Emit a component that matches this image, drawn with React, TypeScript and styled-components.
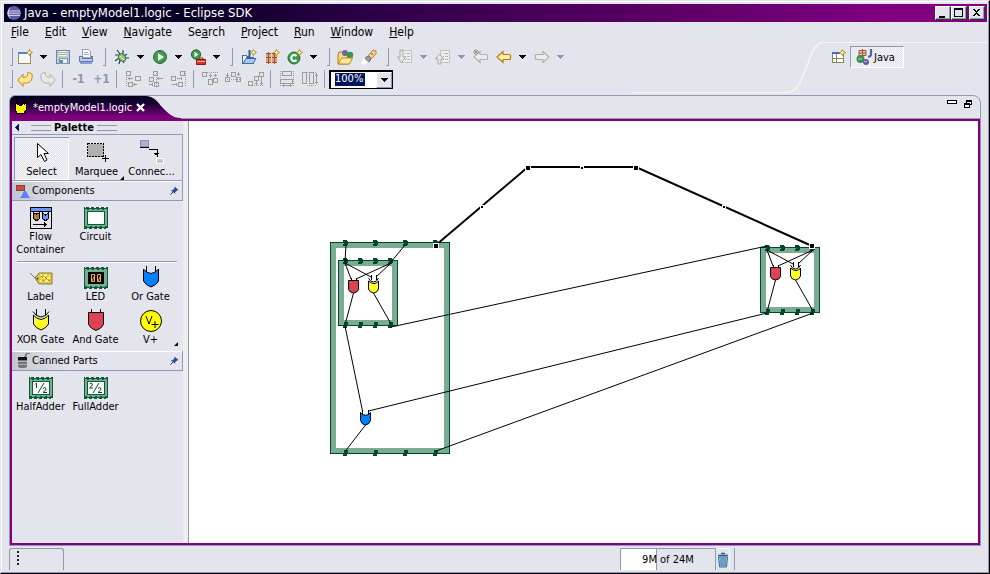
import React from "react";
import styled, { createGlobalStyle, css } from "styled-components";

const face = "#e4e4ec";
const edge = "#8e99b3";
const light = "#f6f6f2";
const purple = "#800080";
const navy = "#00155c";

const GlobalStyle = createGlobalStyle`
  * { box-sizing: border-box; }
  html, body { margin: 0; height: 100%; }
  body { background: ${face}; color: #000; font: 11px/13px "DejaVu Sans Condensed", "DejaVu Sans", sans-serif; }
  button, select, input { font: inherit; color: inherit; }
  button { background: none; border: 0; padding: 0; margin: 0; }
  svg { display: block; flex: none; }
`;

const Window = styled.div`
  min-height: 100vh;
  display: flex;
  flex-direction: column;
  background: ${face};
  padding: 3px 2px 0 3px;
  border: 1px solid;
  border-color: ${face} #000 #000 ${face};
  box-shadow: inset -1px -1px ${edge}, inset 1px 1px #fff;
  overflow: hidden;
`;

const TitleBar = styled.header`
  display: flex;
  align-items: center;
  gap: 2px;
  height: 18px;
  padding: 0 2px;
  color: #fff;
  background: linear-gradient(90deg, #000020 0%, #0a0028 20%, #2e0048 38%, #5a0064 66%, ${purple} 90%);
`;
const Title = styled.h1`
  margin: 0;
  flex: 1;
  font-size: 13px;
  line-height: 18px;
  font-weight: normal;
`;
const CaptionButtons = styled.div`
  display: flex;
`;
const CaptionButton = styled.button<{ $apart?: boolean }>`
  width: 16px;
  height: 14px;
  margin-left: ${(p) => (p.$apart ? 2 : 0)}px;
  display: grid;
  place-items: center;
  background: ${face};
  border: 1px solid;
  border-color: #fff #333 #333 #fff;
  box-shadow: inset -1px -1px ${edge};
`;

const MenuBar = styled.nav`
  display: flex;
  gap: 16px;
  height: 20px;
  align-items: center;
  padding-left: 7px;
`;
const MenuButton = styled.button`
  font-size: 12px;
  line-height: 18px;
`;

const ToolArea = styled.div`
  display: flex;
  height: 53px;
`;
const ToolRows = styled.div`
  padding: 4px 0 0 4px;
`;
const ToolRow = styled.div`
  display: flex;
  height: 22px;
  align-items: center;
`;
const Grip = styled.span<{ $inner?: boolean }>`
  width: 5px;
  height: 18px;
  border: solid ${edge};
  border-width: 0 1px 0 0;
  box-shadow: inset 0 -1px ${edge};
  clip-path: inset(0 0 0 2px);
  margin: ${(p) => (p.$inner ? "0 4px" : "0")};
`;
const Separator = styled.span`
  width: 8px;
  height: 18px;
  border-left: 3px solid ${face};
  background: linear-gradient(90deg, ${edge} 1px, transparent 1px);
`;
const ToolButton = styled.button`
  width: 23px;
  height: 22px;
  display: grid;
  place-items: center;
`;
const ArrowButton = styled.button<{ $off?: boolean }>`
  width: 15px;
  height: 22px;
  display: grid;
  place-items: center;
  color: ${(p) => (p.$off ? edge : "#000")};
`;
const StepButton = styled(ToolButton)`
  color: #8c97b3;
  font-size: 12px;
  font-weight: bold;
`;
const Combo = styled.label`
  position: relative;
  width: 64px;
  height: 19px;
  border: 2px solid #000;
  border-right-width: 1px;
  border-bottom-width: 1px;
  background: #fff;
  display: flex;
`;
const ComboSelect = styled.select`
  appearance: none;
  border: 0;
  outline: 0;
  flex: 1;
  min-width: 0;
  padding: 0 0 2px 4px;
  color: #fff;
  background: linear-gradient(${navy}, ${navy}) 4px 1px / 30px 13px no-repeat;
`;
const ComboArrow = styled.span`
  position: absolute;
  right: 0;
  top: 0;
  bottom: 0;
  width: 16px;
  display: grid;
  place-items: center;
  background: ${face};
  border: 1px solid;
  border-color: #fff ${edge} ${edge} #fff;
  pointer-events: none;
`;

const ShelfLine = styled.div`
  flex: 1;
  height: 51px;
  margin-left: 64px;
  border-bottom: 1px solid ${light};
`;
const Perspectives = styled.div`
  flex: 0 0 164px;
  height: 40px;
  border-top: 1px solid ${light};
  padding: 3px 0 0 4px;
  display: flex;
  align-items: flex-start;
`;
const PerspectiveButton = styled.button`
  display: flex;
  align-items: center;
  gap: 1px;
  width: 54px;
  height: 22px;
  padding-left: 5px;
  border: 1px solid;
  border-color: ${edge} #fff #fff ${edge};
  background: repeating-conic-gradient(#f3f3f6 0 25%, ${face} 0 50%) 0 0 / 2px 2px;
`;

const Workbench = styled.main`
  flex: 1;
  display: flex;
  flex-direction: column;
  margin: 0 6px 0 5px;
  border: 1px solid ${edge};
  border-radius: 6px 8px 0 0;
`;
const TabStrip = styled.div`
  display: flex;
  align-items: flex-start;
  height: 23px;
  border-bottom: 1px solid ${edge};
`;
const tabFill = `linear-gradient(#00001c 0%, #1c0034 35%, #6c0070 80%, ${purple} 100%)`;
const Tab = styled.div`
  display: flex;
  align-items: center;
  height: 23px;
  padding-left: 4px;
  color: #fff;
  background: ${tabFill};
  border-top-left-radius: 5px;
`;
const TabName = styled.span`
  width: 109px;
  padding-left: 6px;
  white-space: nowrap;
`;
const TabTail = styled.span`
  width: 40px;
  height: 23px;
  background: ${tabFill};
  clip-path: path("M0 0 C10 0 13 7 17 11 C23 17 27 22 36 22 L36 23 L0 23 Z");
`;
const ViewButtons = styled.div`
  margin-left: auto;
  display: flex;
  gap: 7px;
  padding: 3px 7px 0 0;
`;
const Editor = styled.section`
  flex: 1;
  display: flex;
  min-height: 0;
  border: solid ${purple};
  border-width: 2px;
`;
const PalettePane = styled.aside`
  flex: 0 0 177px;
  padding-right: 5px;
  border-right: 1px solid ${edge};
  box-shadow: inset -5px 0 #eeeef2;
`;
const PaletteHead = styled.div`
  display: flex;
  align-items: center;
  gap: 3px;
  height: 13px;
  padding-left: 3px;
`;
const PaletteTitle = styled.h2`
  margin: 0;
  font-size: 11px;
`;
const HeadRule = styled.span<{ $gap?: boolean }>`
  width: 20px;
  height: 6px;
  margin-left: ${(p) => (p.$gap ? 8 : 0)}px;
  border: solid ${edge};
  border-width: 1px 0;
`;
const Tools = styled.div`
  display: grid;
  grid-template-columns: repeat(3, 55px);
  height: 47px;
  padding: 2px 0 0 2px;
  border: solid ${edge};
  border-width: 1px 1px 1px 0;
`;
const PaletteItem = styled.button<{ $on?: boolean }>`
  position: relative;
  display: flex;
  flex-direction: column;
  align-items: center;
  min-width: 0;
  ${(p) =>
    p.$on &&
    css`
      box-shadow: inset 1px 1px ${edge}, inset -1px -1px #fff;
      background: repeating-conic-gradient(#f3f3f6 0 25%, ${face} 0 50%) 0 0 / 2px 2px;
    `}
`;
const ToolItem = styled(PaletteItem)`
  padding-top: 3px;
  white-space: nowrap;
`;
const Drawer = styled.button`
  display: flex;
  align-items: center;
  gap: 1px;
  width: 100%;
  height: 20px;
  padding: 0 3px;
  background: linear-gradient(90deg, #c2c8cf, ${face} 35%);
  border: solid ${edge};
  border-width: 0 1px 1px 0;
  text-align: left;
  box-shadow: inset 0 1px #fff;
`;
const DrawerName = styled.span`
  flex: 1;
`;
const ItemGrid = styled.div`
  display: grid;
  grid-template-columns: repeat(3, 55px);
  row-gap: 6px;
  align-items: start;
  padding: 5px 0 5px 1px;
`;
const Rule = styled.hr`
  margin: 0 6px 0 5px;
  border: 0;
  height: 2px;
  margin-bottom: -2px;
  background: linear-gradient(${edge} 1px, #fff 1px);
`;
const Corner = styled.span`
  position: absolute;
  right: 0;
  bottom: 0;
  border: 2px solid;
  border-color: transparent #000 #000 transparent;
`;
const Canvas = styled.div`
  flex: 1;
  min-width: 0;
  background: #fff;
  overflow: hidden;
`;

const StatusBar = styled.footer`
  display: flex;
  align-items: flex-start;
  height: 27px;
  padding: 2px 0 0 5px;
`;
const StatusHandle = styled.div`
  width: 55px;
  height: 22px;
  padding: 2px 0 0 6px;
  border: 1px solid ${edge};
  border-bottom: 0;
  border-radius: 3px 3px 0 0;
`;
const Heap = styled.div`
  display: flex;
  margin-left: auto;
  margin-right: 252px;
  height: 22px;
  padding-right: 4px;
  border-right: 1px solid ${edge};
`;
const HeapMeter = styled.div`
  width: 96px;
  line-height: 21px;
  text-align: center;
  border: solid ${edge};
  border-width: 1px 1px 0 1px;
  background: linear-gradient(90deg, #fff 35px, ${edge} 35px 36px, ${face} 36px);
`;
const TrashButton = styled.button`
  width: 14px;
  border: solid ${light};
  border-width: 1px 1px 0 0;
  display: grid;
  place-items: center;
`;

const Svg = ({ w = 16, h = 16, soft, children }: { w?: number; h?: number; soft?: boolean; children: React.ReactNode }) => (
  <svg width={w} height={h} viewBox={`0 0 ${w} ${h}`} fill="none" shapeRendering={soft ? "auto" : "crispEdges"} aria-hidden="true">
    {children}
  </svg>
);

const Down = () => (
  <Svg w={7} h={4}><path d="M0 0h7v1h-1v1h-1v1h-1v1h-1v-1h-1v-1h-1v-1h-1z" fill="currentColor" /></Svg>
);
const Spark = ({ x, y }: { x: number; y: number }) => (
  <path transform={`translate(${x} ${y})`} d="M3.5 .5 L4.5 2.5 L6.5 3.5 L4.5 4.5 L3.5 6.5 L2.5 4.5 L.5 3.5 L2.5 2.5Z" fill="#fff6b8" stroke="#c08a18" shapeRendering="auto" />
);

const NewIcon = () => (
  <Svg><path d="M1.500 3.500h12v11h-12z" fill="#fff" stroke="#a08c50" /><path d="M2 4h11v10h-11z" fill="#f4f8ff" /><path d="M1 3h9v2h-9z" fill="#4b86c6" /><Spark x={9} y={0} /></Svg>
);
const SaveIcon = () => (
  <Svg><path d="M1.500 1.500h13v13h-13z" fill="#b9cbdc" stroke="#6d88a6" /><path d="M4 2h8v5h-8z" fill="#f2f7e8" /><path d="M4 3h8M4 5h8" stroke="#9db77f" /><path d="M4 9h8v5h-8z" fill="#e7edf5" stroke="#8298b3" /><path d="M5 11h3v3h-3z" fill="#6d88a6" /></Svg>
);
const PrintIcon = () => (
  <Svg><path d="M4.500 .5h6l2 2v6h-8z" fill="#fff" stroke="#91a3bd" /><path d="M6 3.500h4M6 5.500h5" stroke="#9aaed0" /><path d="M1.500 7.500h2.500v2h9v-2h1.500v5h-13z" fill="#bcc9e4" stroke="#6379b0" /><path d="M2 12.500h12v2h-12z" fill="#8d9bd0" /></Svg>
);
const BugIcon = () => (
  <Svg soft><path d="M3 1l3 4M9 1v4M1 6h4M13 5l-3 2M1 12l4-3M5 15l1-4M10 14l-1-3M15 9h-4" stroke="#24484a" strokeWidth="1.200" /><ellipse cx="8" cy="8.500" rx="3.300" ry="4.200" transform="rotate(-40 8 8.500)" fill="#9cc56b" stroke="#2a6a5c" /><path d="M6 7l4 4" stroke="#e6f3c0" /></Svg>
);
const RunIcon = () => (
  <Svg soft><circle cx="8" cy="8" r="6.500" fill="#3f9a4a" stroke="#1e6b33" /><path d="M6 4l6 4-6 4z" fill="#fff" /></Svg>
);
const ExternalIcon = () => (
  <Svg soft><circle cx="6" cy="5.500" r="4.700" fill="#3f9a4a" stroke="#1e6b33" /><path d="M4.500 2.800l3.800 2.700-3.800 2.700z" fill="#fff" /><path d="M9 10.500v-1.500h4v1.500" stroke="#a02020" /><path d="M6.500 10.500h9v5h-9z" fill="#d8342c" stroke="#8e1c1c" /><path d="M7 12.500h8" stroke="#ffb0a0" /></Svg>
);
const ProjectIcon = () => (
  <Svg><path d="M1.500 14v-8h4l1 2h6v6z" fill="#f4f0d0" stroke="#3f6cae" /><path d="M2 14.500l3-5h10l-3 5z" fill="#a9c6ee" stroke="#3f6cae" shapeRendering="auto" /><path d="M8.500 1v6q0 2-3 1" stroke="#2c59a6" strokeWidth="2" shapeRendering="auto" /><Spark x={9} y={0} /></Svg>
);
const PackageIcon = () => (
  <Svg><path d="M2 4h11v10h-11z" fill="#dca27c" /><path d="M2 4.500h11M2 8.500h11M2 13.500h11M4.500 3v12M10.500 3v12" stroke="#a0522f" /><path d="M7 3v12" stroke="#f4cfac" /><Spark x={9} y={0} /></Svg>
);
const ClassIcon = () => (
  <Svg soft><circle cx="7" cy="9" r="6" fill="#3e9b57" stroke="#21713a" /><path d="M9.500 7a3 3 0 1 0 0 4" stroke="#fff" strokeWidth="2" /><Spark x={9} y={0} /></Svg>
);
const OpenTypeIcon = () => (
  <Svg w={17} soft><path d="M1 6l1-3h4l1 2h5v10h-11z" fill="#f5d987" stroke="#aa7a20" /><circle cx="8" cy="4" r="3" fill="#6c63a8" /><circle cx="13" cy="6" r="3.300" fill="#3d9254" /><path d="M1.500 15l3-6h11l-3 6z" fill="#ffe89c" stroke="#b98820" /></Svg>
);
const TorchIcon = () => (
  <Svg w={17} soft><path d="M8 7l5-6 3 1v3l-5 5z" fill="#f7d08c" stroke="#c28434" /><path d="M6 8l3-1 2 2-1 3-2 1-3-3z" fill="#9a9a9a" stroke="#777" /><path d="M4 9l4 4-4 3-3-1z" fill="#fffef0" /><circle cx="12" cy="5" r="1" fill="#7584b0" /></Svg>
);
const greyLine = "#b5b5b5";
const AnnotationIcon = ({ up }: { up?: boolean }) => (
  <Svg><path d="M5.500 1.500h9v12h-9z" fill="#eee" stroke="#c4c4c4" /><path d="M8 4.500h1M10 4.500h3M8 7.500h1M10 7.500h3M8 10.500h1M10 10.500h3" stroke={greyLine} /><path d={up ? "M4.500 5l4 5h-2.500v5h-3v-5h-2.500z" : "M3 1h3v7h2.500l-4 6-4-6h2.500z"} fill="#e8e8e8" stroke="#aaa" shapeRendering="auto" /></Svg>
);
const ArrowIcon = ({ flip, off, star }: { flip?: boolean; off?: boolean; star?: boolean }) => (
  <Svg soft><path transform={flip ? "translate(16 0) scale(-1 1)" : undefined} d="M1 8l6-5.500v3h6.500q1 0 1 1v3q0 1-1 1h-6.500v3z" fill={off ? "#ececec" : "#fff0a8"} stroke={off ? "#b0b0b0" : "#b87c10"} strokeWidth="1.200" />{star && <path d="M3 0v6M0 3h6M1 1l4 4M5 1l-4 4" stroke="#999" />}</Svg>
);
const UndoIcon = ({ flip }: { flip?: boolean }) => (
  <Svg soft><g transform={flip ? "translate(16 0) scale(-1 1)" : undefined}><path d="M.8 9l5.200-6v3.500q4 0 4.500-2l.5-3.500 4 2q1 6-3 8.500-2.500 1-6 .5v3.500z" fill={flip ? "#e8e8e8" : "#ffe793"} stroke={flip ? "#b4b4b4" : "#c28b20"} /></g></Svg>
);
const AlignIcon = ({ kind }: { kind: number }) => {
  const s = { stroke: "#9c9c9c" };
  const boxes = [
    "M1.500 .5h4v4h-4zM10.500 5.500h5v4h-5zM3.500 11.500h4v4h-4z",
    "M5.500 .5h4v4h-4zM1.500 6.500h4v4h-4zM6.500 11.500h4v4h-4z",
    "M9.500 .5h4v4h-4zM.5 5.500h4v4h-4zM7.500 11.500h4v4h-4z",
    "M.5 1.500h4v4h-4zM6.500 8.500h4v5h-4zM11.500 7.500h4v4h-4z",
    "M.5 6.500h4v4h-4zM6.500 1.500h4v4h-4zM11.500 6.500h4v4h-4z",
    "M.5 10.500h4v4h-4zM6.500 5.500h4v4h-4zM11.500 1.500h4v4h-4z",
    "M3.500 .5h9v4h-9zM1.500 8.500h12v4h-12z",
    "M.5 1.500h4v11h-4zM7.500 1.500h4v11h-4z",
  ];
  const dots = ["M1.500 6v10", "M8 0v16", "M14.500 0v16", "M5 1.500h11", "M0 8.500h16", "M0 14.500h16", "M1.500 0v16M14.500 0v16", "M5 1.500h10M5 14.500h10"];
  const heads = ["M3 7.500h5M4.500 6v3M8 13.500h4M9.500 12v3", "M9 7.500h6M10.500 6v3M1 13.500h4M4.500 12v3", "M6 7.500h5M10.500 6v3M1 13.500h5M5.500 12v3", "M8.500 3v4M7 4.500h3M13.500 3v3M12 4.500h3", "M2.500 2v4M1 4.500h3M13.500 1v4M12 3.500h3", "M8.500 10v4M7 12.500h3M13.500 6v8M12 12.500h3", "M3 14.500h10M4.500 13v3M11.500 13v3", "M14.500 2v11M13 4.500h3M13 11.500h3"];
  return <Svg><path d={boxes[kind]} {...s} /><path d={dots[kind]} {...s} strokeDasharray="1 1" /><path d={heads[kind]} {...s} /></Svg>;
};
const EclipseIcon = () => (
  <Svg soft><circle cx="8" cy="8" r="7" fill="#5a5aa0" /><path d="M5 2a7 7 0 0 0 0 12 9 9 0 0 1 0-12z" fill="#d8d8f0" /><path d="M2 6h12M1.500 8.200h13M2 10.400h12" stroke="#dcdcf4" /></Svg>
);
const OpenPerspectiveIcon = () => (
  <Svg><path d="M1.500 3.500h11v10h-11z" fill="#fff" stroke="#8b8260" /><path d="M1 3h8v2h-8z" fill="#3c73bd" /><path d="M5.500 5v9M2 9.500h10" stroke="#8b8260" /><Spark x={8} y={0} /></Svg>
);
const JavaIcon = () => (
  <Svg w={17} soft><path d="M3 1.500h7v5h-7zM3 4h7M6.500 0v7" stroke="#a5523c" fill="#f0c4a8" /><path d="M15 0v5q0 3-3 2.500" stroke="#3d6bb3" strokeWidth="2.200" /><circle cx="4.500" cy="10" r="4" fill="#3d9254" /><circle cx="10" cy="13" r="3" fill="#6c5aa8" /><path d="M2 10h4M8 12.500h3" stroke="#a6d4b0" /></Svg>
);
const PinIcon = () => (
  <Svg w={9} h={9} soft><path d="M4.500 .5l4 3.500-1.500.5-2 2 .5 1.500-5-4 2 .3 2-2z" fill="#2c4a94" /><path d="M3 6l-2.500 2.700" stroke="#334" /></Svg>
);

const chipGreen = "#0a5c38";
const Chip = ({ children }: { children?: React.ReactNode }) => (
  <Svg w={24} h={24}>
    <path d="M0 2h24v20h-24z" fill="#7aac94" />
    <path d="M.5 1v21M23.500 1v21" stroke={chipGreen} />
    <path d="M0 2.500h24M0 21.500h24" stroke={chipGreen} />
    <path d="M2 1.500h21M0 22.500h22" stroke={chipGreen} strokeDasharray="3 2" />
    <path d="M3 3.500h20M1 20.500h22" stroke={chipGreen} strokeDasharray="2 3" />
    {children}
  </Svg>
);
const PartIcon = ({ kind }: { kind: string }) => {
  switch (kind) {
    case "flow":
      return <Svg w={24} h={24}><path d="M1.500 1.500h21v21h-21z" fill="#e4e4ec" stroke="#000" /><path d="M2 2h20v3h-20z" fill="#6a98ff" /><path d="M1 5.500h22" stroke="#000" /><path d="M4.500 7v4q0 3 3 3.500q3-.5 3-3.500v-4l-3 1z" fill="#c07828" stroke="#000" /><path d="M13.500 7v4q0 3 3 3.500q3-.5 3-3.500v-4l-3 2z" fill="#6a98ff" stroke="#000" /><path d="M4 18.500h14M15.500 16v5M16.500 17v3" stroke="#000" /></Svg>;
    case "circuit":
      return <Chip><path d="M3.500 5.500h17v13h-17z" fill="#fff" stroke={chipGreen} /></Chip>;
    case "led":
      return <Chip><path d="M4 6h16v12h-16z" fill="#000" /><path d="M7.500 8.500h3v7h-3zM13.500 8.500h3v7h-3zM8 15l3-6M14 15l3-6" stroke="#f5b21c" shapeRendering="auto" /></Chip>;
    case "half":
    case "full":
      return <Chip><path d="M3.500 5.500h17v13h-17z" fill="#fff" stroke={chipGreen} /><path d={kind === "half" ? "M6 8.500l1.500-1.500v5" : "M5.500 8q1.500-2 3 0q0 2-3 4h3.500"} stroke="#00502c" shapeRendering="auto" /><path d="M9 17l6-10M14 12.500q2-2 3 0q1 1-3 4h4" stroke="#00502c" shapeRendering="auto" /></Chip>;
    case "label":
      return <Svg w={24} h={24} soft><path d="M1 7l6 6" stroke="#777" /><path d="M6 12l4-5h13v11h-13z" fill="#dcc850" stroke="#8c7c28" /><path d="M11 9h2M15 9h3M20 10h1M12 12h4M18 12h3M11 15h3M16 15h4" stroke="#fff36a" strokeWidth="2" /><path d="M12 10l2 2M16 11l2 2M19 14l2 1M13 15l2-1" stroke="#8c7c28" /><circle cx="8.500" cy="12.500" r="1" fill="#333" /></Svg>;
    case "or":
      return <Svg w={22} h={24} soft><path d="M6.500 0v6M15.500 0v6" stroke="#000" /><path d="M3.500 3v12q2 4 7.500 6q5.500-2 7.500-6v-12l-3 3q-4.500 3-9 0z" fill="#0080ff" stroke="#000" /></Svg>;
    case "xor":
      return <Svg w={22} h={24} soft><path d="M6.500 0v6M15.500 0v6" stroke="#000" /><path d="M3.500 6l3 3q4.500 3 9 0l3-3v9q-2 4-7.500 6q-5.500-2-7.500-6z" fill="#ffff28" stroke="#000" /><path d="M3 2.500l3.500 4q4.500 3 9 0l3.500-4" stroke="#000" /></Svg>;
    case "and":
      return <Svg w={22} h={24} soft><path d="M6.500 0v4M15.500 0v4" stroke="#000" /><path d="M3.500 3.500h15v12q-2 4-7.500 6q-5.500-2-7.500-6z" fill="#dc4454" stroke="#000" /></Svg>;
    default:
      return <Svg w={24} h={24} soft><circle cx="12" cy="12" r="10.500" fill="#ffff00" stroke="#000" /><path d="M7 7l3 8 3-8M12.500 15.500h7M16 12v7" stroke="#000" /></Svg>;
  }
};

const Item = ({ kind, label, more }: { kind: string; label: string; more?: boolean }) => (
  <PaletteItem><PartIcon kind={kind} />{label}{more && <Corner />}</PaletteItem>
);

const menus = [["", "F", "ile"], ["", "E", "dit"], ["", "V", "iew"], ["", "N", "avigate"], ["Se", "a", "rch"], ["", "P", "roject"], ["", "R", "un"], ["", "W", "indow"], ["", "H", "elp"]];

const Tool = ({ name, children }: { name: string; children: React.ReactNode }) => <ToolButton aria-label={name}>{children}</ToolButton>;
const Arrow = ({ off }: { off?: boolean }) => <ArrowButton $off={off} disabled={off} aria-label="More"><Down /></ArrowButton>;

const darkGreen = "#00482a";
const Circuit = ({ x, y, w, h, pins }: { x: number; y: number; w: number; h: number; pins: number[] }) => (
  <g transform={`translate(${x} ${y})`} shapeRendering="crispEdges">
    <path d={`M0 0H${w}V${h}H0ZM6 6V${h - 6}H${w - 6}V6Z`} fillRule="evenodd" fill="#7aac94" />
    <rect x=".5" y=".5" width={w - 1} height={h - 1} stroke={darkGreen} />
    {pins.map((p) => (
      <g key={p} fill={darkGreen}>
        <path d={`M${p - 2} -2h4v1h1v4h-1v1h-4v-2h1v-2h-1z`} />
        <path d={`M${p - 1} ${h - 4}h4v4h-1v2h-4v-2h1z`} />
      </g>
    ))}
  </g>
);
const HalfAdder = ({ x, y }: { x: number; y: number }) => (
  <>
    <Circuit x={x} y={y} w={60} h={66} pins={[7, 22, 37, 52]} />
    <g transform={`translate(${x} ${y})`} stroke="#000">
      <path d="M7 3l6 16M7 3l26 14M53 3l-35 16M53 3l-15 14M15.500 33l-8 30M35.500 33l17 30" />
      <path d="M13.500 18v3M18.500 18v3M33.500 15v5M38.500 15v5" />
      <path d="M10.500 20.500h10v9q-1 3-5 3.500q-4-.5-5-3.500z" fill="#dc4454" />
      <path d="M30.500 21l3 2q2.500 1 5 0l2-2v8q-1 3.500-5 4q-4-.5-5-4z" fill="#ffff28" />
      <path d="M30.500 18l2 3q3 2 6 0l2-3" />
    </g>
  </>
);

const Diagram = () => (
  <svg width="789" height="421" viewBox="189 121 789 421" fill="none" role="img" aria-label="Logic diagram">
    <Circuit x={330} y={242} w={120} h={212} pins={[15, 45, 75, 105]} />
    <HalfAdder x={338} y={260} />
    <HalfAdder x={760} y={247} />
    <g stroke="#000">
      <path d="M346 245l-1 17M405 245l-14 17M345 326l17.500 85M391 327L767 246M368.500 411L767 313M365.500 425l-20 26M436 451L813 313" />
      <path d="M362.500 410v5M368.500 410v5" />
      <path d="M360.500 412.500l2 2q3 1.500 6 0l2-2v8q-1 4-5 4.500q-4-.5-5-4.500z" fill="#0080ff" />
      <path d="M436 245L528 167H636L812 246" strokeWidth="2" />
    </g>
    <g fill="#000" stroke="#fff" shapeRendering="crispEdges">
      {[[436, 246], [528, 168], [636, 168], [812, 246]].map(([x, y]) => (
        <rect key={x} x={x - 2.5} y={y - 2.5} width="5" height="5" />
      ))}
      {[[482, 207], [582, 168], [724, 207]].map(([x, y]) => (
        <rect key={x} x={x - 1.5} y={y - 1.5} width="3" height="3" />
      ))}
    </g>
  </svg>
);

export default function App() {
  return (
    <>
      <GlobalStyle />
      <Window>
        <TitleBar>
          <EclipseIcon />
          <Title>Java - emptyModel1.logic - Eclipse SDK</Title>
          <CaptionButtons>
            <CaptionButton aria-label="Minimize"><Svg w={10} h={10}><path d="M1 8h6v2h-6z" fill="#000" /></Svg></CaptionButton>
            <CaptionButton aria-label="Maximize"><Svg w={10} h={10}><path d="M.5 .5h8v8h-8zM0 1.500h9" stroke="#000" /></Svg></CaptionButton>
            <CaptionButton $apart aria-label="Close"><Svg w={10} h={10}><path d="M1 1h2v1h1v1h1v-1h1v-1h2v1h-1v1h-1v1h-1v1h1v1h1v1h1v1h-2v-1h-1v-1h-1v1h-1v1h-2v-1h1v-1h1v-1h1v-1h-1v-1h-1v-1h-1z" fill="#000" /></Svg></CaptionButton>
          </CaptionButtons>
        </TitleBar>
        <MenuBar>
          {menus.map(([a, b, c]) => <MenuButton key={b + c}>{a}<u>{b}</u>{c}</MenuButton>)}
        </MenuBar>
        <ToolArea>
          <ToolRows>
            <ToolRow>
              <Grip /><Tool name="New"><NewIcon /></Tool><Arrow />
              <Tool name="Save"><SaveIcon /></Tool><Tool name="Print"><PrintIcon /></Tool>
              <Grip $inner /><Tool name="Debug"><BugIcon /></Tool><Arrow />
              <Tool name="Run"><RunIcon /></Tool><Arrow />
              <Tool name="External Tools"><ExternalIcon /></Tool><Arrow />
              <Grip $inner /><Tool name="New Java Project"><ProjectIcon /></Tool>
              <Tool name="New Package"><PackageIcon /></Tool><Tool name="New Class"><ClassIcon /></Tool><Arrow />
              <Grip $inner /><Tool name="Open Type"><OpenTypeIcon /></Tool><Tool name="Search"><TorchIcon /></Tool>
              <Grip $inner /><Tool name="Next Annotation"><AnnotationIcon /></Tool><Arrow off />
              <Tool name="Previous Annotation"><AnnotationIcon up /></Tool><Arrow off />
              <Tool name="Last Edit Location"><ArrowIcon off star /></Tool>
              <Tool name="Back"><ArrowIcon /></Tool><Arrow />
              <Tool name="Forward"><ArrowIcon flip off /></Tool><Arrow off />
            </ToolRow>
            <ToolRow>
              <Grip /><Tool name="Undo"><UndoIcon /></Tool><Tool name="Redo"><UndoIcon flip /></Tool>
              <Separator /><StepButton>-1</StepButton><StepButton>+1</StepButton>
              <Separator />{[0, 1, 2].map((k) => <Tool key={k} name={`Align ${k + 1}`}><AlignIcon kind={k} /></Tool>)}
              <Separator />{[3, 4, 5].map((k) => <Tool key={k} name={`Align ${k + 1}`}><AlignIcon kind={k} /></Tool>)}
              <Separator /><Tool name="Match Width"><AlignIcon kind={6} /></Tool><Tool name="Match Height"><AlignIcon kind={7} /></Tool>
              <Separator />
              <Combo>
                <ComboSelect aria-label="Zoom" defaultValue="100%"><option>100%</option></ComboSelect>
                <ComboArrow><Down /></ComboArrow>
              </Combo>
            </ToolRow>
          </ToolRows>
          <ShelfLine />
          <Svg w={36} h={53} soft><path d="M0 50.500C11 50 14 38 20 24C25 10 28 1 36 .5" stroke={light} strokeWidth="1.500" /></Svg>
          <Perspectives>
            <Tool name="Open Perspective"><OpenPerspectiveIcon /></Tool>
            <PerspectiveButton><JavaIcon />Java</PerspectiveButton>
          </Perspectives>
        </ToolArea>
        <Workbench>
          <TabStrip>
            <Tab>
              <Svg w={13} h={13}><path d="M1 2h2l2 2h3l2-2h2v7l-2 3h-7l-2-3z" fill="#ffff00" stroke="#000" /><path d="M3 0v4M10 0v4" stroke="#000" /></Svg>
              <TabName>*emptyModel1.logic</TabName>
              <Svg w={9} h={9} soft><path d="M1 1l7 7M8 1l-7 7" stroke="#fff" strokeWidth="2.400" /></Svg>
            </Tab>
            <TabTail />
            <ViewButtons>
              <Svg w={10} h={10}><path d="M.5 1.500h9v3h-9z" stroke="#000" fill="#fff" /></Svg>
              <Svg w={9} h={10}><path d="M2.500 1.500h5v4h-5zM2 2.500h6" stroke="#000" fill="#fff" /><path d="M.5 4.500h5v4h-5zM0 5.500h6" stroke="#000" fill="#fff" /></Svg>
            </ViewButtons>
          </TabStrip>
          <Editor>
            <PalettePane>
              <PaletteHead>
                <Svg w={5} h={8}><path d="M4 0v7l-4-3.500z" fill={navy} /></Svg>
                <HeadRule $gap /><PaletteTitle>Palette</PaletteTitle><HeadRule />
              </PaletteHead>
              <Tools>
                <ToolItem $on>
                  <Svg w={24} h={25} soft><path d="M7.500 3.500v14l3.500-3 3.500 7 2.500-1.500-3-6.500h4.500z" fill="#fff" stroke="#000" /></Svg>Select
                </ToolItem>
                <ToolItem>
                  <Svg w={24} h={25}><path d="M2.500 3.500h16v13h-16z" fill="#b0b0b0" stroke="#000" strokeDasharray="2 1" /><path d="M17 18.500h7M20.500 15v7" stroke="#000" /></Svg>Marquee<Corner />
                </ToolItem>
                <ToolItem>
                  <Svg w={24} h={25}><path d="M.5 .5h8v6h-8z" fill="#b0b0d8" stroke="#8890b0" /><path d="M0 7.500h9M9 9.500h8v7M14 13.500h5M15 14.500h3" stroke="#000" /><path d="M16.500 18.500h7v5h-7z" fill="#c8c8c8" stroke="#fff" /></Svg>Connec...
                </ToolItem>
              </Tools>
              <Drawer>
                <Svg><path d="M1 2h8v5h-8z" fill="#c84c38" stroke="#8a4038" /><path d="M5 15l5-8 5 8z" fill="#5c80ff" /></Svg>
                <DrawerName>Components</DrawerName><PinIcon />
              </Drawer>
              <ItemGrid>
                <Item kind="flow" label="Flow Container" /><Item kind="circuit" label="Circuit" />
              </ItemGrid>
              <Rule />
              <ItemGrid>
                <Item kind="label" label="Label" /><Item kind="led" label="LED" /><Item kind="or" label="Or Gate" />
                <Item kind="xor" label="XOR Gate" /><Item kind="and" label="And Gate" /><Item kind="v" label="V+" more />
              </ItemGrid>
              <Drawer>
                <Svg><path d="M3 5h9v9q-4 3-9 0z" fill="#777" /><path d="M3 8.500h9M3 11.500h9" stroke="#aaa" /><ellipse cx="7.500" cy="5.500" rx="4.500" ry="2" fill="#111" /><path d="M10 4l2-4h3" stroke="#777" strokeWidth="2" /></Svg>
                <DrawerName>Canned Parts</DrawerName><PinIcon />
              </Drawer>
              <ItemGrid>
                <Item kind="half" label="HalfAdder" /><Item kind="full" label="FullAdder" />
              </ItemGrid>
            </PalettePane>
            <Canvas><Diagram /></Canvas>
          </Editor>
        </Workbench>
        <StatusBar>
          <StatusHandle><Svg w={4} h={16}><path d="M1 0h2v2h-2zM1 4h2v2h-2zM1 8h2v2h-2zM1 12h2v2h-2z" fill="#222" /></Svg></StatusHandle>
          <Heap>
            <HeapMeter>9M of 24M</HeapMeter>
            <TrashButton aria-label="Run Garbage Collector">
              <Svg w={12} h={16} soft><path d="M1 3.500h10M4 1.500h4" stroke="#2c6088" strokeWidth="1.500" /><path d="M1.500 5h9l-1 10h-7z" fill="#a8d0e8" stroke="#2c6c9c" /><path d="M4 6v8M6 6v8M8 6v8" stroke="#2c6c9c" /></Svg>
            </TrashButton>
          </Heap>
        </StatusBar>
      </Window>
    </>
  );
}
